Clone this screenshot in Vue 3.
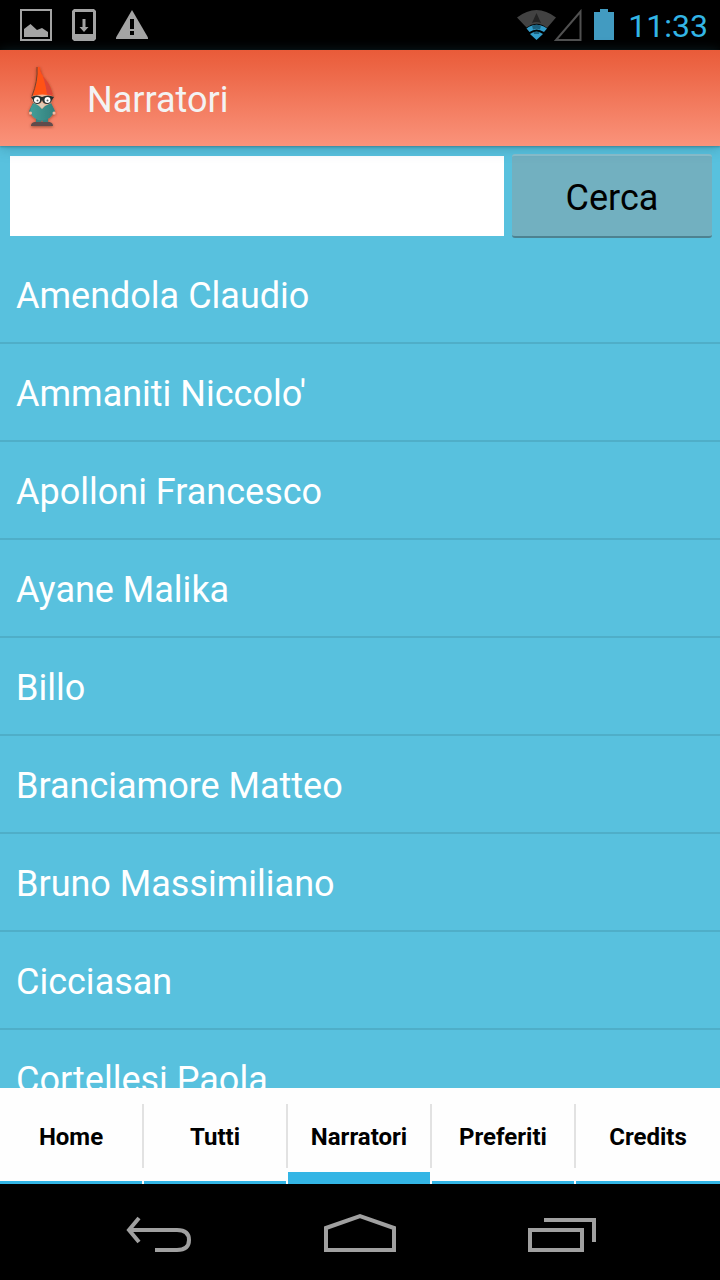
<script setup>
import { ref } from 'vue'

const query = ref('')
const activeTab = ref('Narratori')
const tabs = ['Home', 'Tutti', 'Narratori', 'Preferiti', 'Credits']
const narrators = [
  'Amendola Claudio',
  "Ammaniti Niccolo'",
  'Apolloni Francesco',
  'Ayane Malika',
  'Billo',
  'Branciamore Matteo',
  'Bruno Massimiliano',
  'Cicciasan',
  'Cortellesi Paola',
]
</script>

<template>
  <div class="screen">
    <div class="status">
      <div class="notifications">
        <svg class="picture" width="32" height="32" viewBox="0 0 32 32">
          <rect x="1" y="1" width="30" height="30" fill="none" stroke="#a4a4a4" stroke-width="2" />
          <path d="M4 28V20L10.500 15L17 21L22 19L28 23V28Z" fill="#a4a4a4" />
        </svg>
        <svg class="download" width="24" height="32" viewBox="0 0 24 32">
          <path fill="#a4a4a4" fill-rule="evenodd" d="M2 0H22L24 2V30L22 32H2L0 30V2ZM3 3V25H21V3Z" />
          <path fill="#a4a4a4" d="M10.500 10H13.500V18H16.500L12 23L7.500 18H10.500Z" />
        </svg>
        <svg class="warning" width="32" height="32" viewBox="0 0 32 32">
          <path fill="#a4a4a4" d="M16 1L32 28.500V30H0V28.500Z" />
          <path fill="#000" d="M14 10H18V20H14ZM14 22H18V26H14Z" />
        </svg>
      </div>
      <div class="system">
        <svg width="40" height="32" viewBox="0 0 40 32">
          <path fill="#424242" d="M0 8.500Q19.500 -6.500 39 8.500L30 19Q19.500 11 9.500 18.500Z" />
          <path fill="#242424" d="M19.500 4L24 14Q19.500 12 15 14Z" />
          <path fill="#339dca" d="M9.500 19.500Q19.500 12 30 19.500L27 23Q19.500 18 12.500 23Z" />
          <path fill="#1b607e" d="M15 16.500Q19.500 15 24 16.500L23 20.500Q19.500 19 16 20.500Z" />
          <path fill="#339dca" d="M13 25Q19.500 20.500 26 25L19.500 31Z" />
          <path fill="#1b607e" d="M16.500 23Q19.500 22 22.500 23L22 25H17Z" />
        </svg>
        <svg class="signal" width="28" height="32" viewBox="0 0 28 32">
          <path d="M26.500 2.500V31H2Z" fill="none" stroke="#505050" stroke-width="2" />
        </svg>
        <svg class="battery" width="20" height="32" viewBox="0 0 20 32">
          <path fill="#429bc1" d="M6 0H14V3H20V31H0V3H6Z" />
        </svg>
        <time class="clock">11:33</time>
      </div>
    </div>

    <header class="header">
      <svg class="gnome" width="46" height="76" viewBox="0 0 46 76">
        <defs>
          <filter id="gnome-shadow" x="-30%" y="-20%" width="160%" height="140%">
            <feDropShadow dx="0" dy="1" stdDeviation="1.500" flood-color="#602818" flood-opacity="0.6" />
          </filter>
          <linearGradient id="gnome-coat" x1="0" x2="1">
            <stop offset="0" stop-color="#429e98" />
            <stop offset="1" stop-color="#34817e" />
          </linearGradient>
        </defs>
        <g filter="url(#gnome-shadow)">
          <path fill="#604c4b" d="M11 65Q12 61 20 62H24Q33 61 33 66H11Z" />
          <path fill="#397f7e" d="M16 58H28V62H23L22 60L21 62H16Z" />
          <path fill="#34817e" d="M13 43L9 51L11 54L17 47ZM31 43L35 51L33 54L27 47Z" />
          <ellipse cx="22" cy="50.500" rx="11.500" ry="10" fill="url(#gnome-coat)" />
          <path fill="#f0b99d" d="M12 34H33L31 43L25 46L22 49L19 46L13 42Z" />
          <path fill="#dccdb9" d="M12 39Q17 45 20 44L22 43L25 45Q30 44 32 39L30 43L25 45L22 48L19 45L14 43Z" />
          <path fill="#ff5219" d="M17 7H20Q21 15 26 20Q31 26 33 36Q22 33 12 36Q17 22 17 7Z" />
          <path fill="#da4538" d="M19 7Q21 15 26 20Q31 26 33 36L27 34Q25 19 19 7Z" />
          <path fill="none" stroke="#754330" stroke-width="1" d="M17 7Q18 21 12 36" />
          <circle cx="10.500" cy="53" r="1.500" fill="#edbba5" />
          <circle cx="34" cy="53" r="1.500" fill="#edbba5" />
        </g>
        <path fill="#26302f" d="M11 37Q17 34 22 37Q28 34 34 37L32 40Q31 44 27 44Q23 44 22 40Q21 44 17 44Q13 43 13 40Z" />
        <circle cx="17" cy="40" r="3" fill="#fff" />
        <circle cx="27.500" cy="40" r="3" fill="#fff" />
        <circle cx="17.500" cy="40.500" r="1" fill="#526160" />
        <circle cx="27.500" cy="40.500" r="1" fill="#526160" />
      </svg>
      <h1 class="title">Narratori</h1>
    </header>

    <main class="content">
      <form class="search" @submit.prevent>
        <input v-model="query" class="field" type="text" aria-label="Cerca narratori" />
        <button class="submit" type="submit">Cerca</button>
      </form>
      <ul class="list">
        <li v-for="name in narrators" :key="name" class="row">{{ name }}</li>
      </ul>
    </main>

    <nav class="tabs">
      <button
        v-for="tab in tabs"
        :key="tab"
        type="button"
        class="tab"
        :class="{ active: tab === activeTab }"
        @click="activeTab = tab"
      >
        <span class="tab-label">{{ tab }}</span>
      </button>
    </nav>

    <div class="navbar">
      <button class="key" type="button" aria-label="Indietro">
        <svg width="72" height="40" viewBox="0 0 72 40" fill="none" stroke="#a0a0a0" stroke-width="4">
          <path d="M9 18H57Q69 18 69 28Q69 38 57 38H35" />
          <path d="M19 6L9 18L19 30" />
        </svg>
      </button>
      <button class="key" type="button" aria-label="Home">
        <svg width="72" height="40" viewBox="0 0 72 40">
          <path d="M2 16L36 4L70 16V38H2Z" fill="none" stroke="#a0a0a0" stroke-width="4" />
        </svg>
      </button>
      <button class="key" type="button" aria-label="Recenti">
        <svg width="72" height="40" viewBox="0 0 72 40" fill="none" stroke="#a0a0a0" stroke-width="4">
          <path d="M2 18H54V38H2Z" />
          <path d="M16 8H66V30" />
        </svg>
      </button>
    </div>
  </div>
</template>

<style>
body {
  margin: 0;
  background: #000;
}
</style>

<style scoped>
.screen {
  height: 100vh;
  display: flex;
  flex-direction: column;
  overflow: hidden;
  background: #58c1de;
  font-family: Roboto, "Noto Sans", sans-serif;
}
svg {
  display: block;
  flex: none;
}
button {
  font-family: inherit;
  cursor: pointer;
}
.status {
  flex: none;
  height: 50px;
  box-sizing: border-box;
  padding: 0 12px 0 20px;
  display: flex;
  align-items: center;
  justify-content: space-between;
  background: #000;
}
.notifications,
.system {
  display: flex;
  align-items: center;
}
.notifications {
  gap: 20px;
}
.system {
  gap: 12px;
}
.signal {
  margin-left: -15px;
}
.clock {
  margin-left: 2px;
  padding-top: 2px;
  font-size: 32px;
  line-height: 48px;
  color: #33b5e5;
}
.header {
  flex: none;
  position: relative;
  height: 96px;
  box-sizing: border-box;
  padding-left: 20px;
  display: flex;
  align-items: center;
  gap: 21px;
  background: linear-gradient(#e95b39, #fa937b);
  box-shadow: 0 1px 2px #28647380, 0 2px 12px #28647366;
}
.title {
  margin: 0;
  padding-top: 4px;
  font-size: 36px;
  line-height: 48px;
  font-weight: 400;
  color: #f3f3f3;
}
.content {
  flex: 1;
  min-height: 0;
  overflow: hidden;
}
.search {
  display: flex;
  align-items: center;
  gap: 8px;
  padding: 8px 8px 8px 10px;
}
.field {
  flex: 1;
  min-width: 0;
  height: 80px;
  box-sizing: border-box;
  padding: 0 12px;
  border: 0;
  border-radius: 0;
  background: #fff;
  color: #000;
  font: 36px Roboto, sans-serif;
}
.submit {
  width: 200px;
  height: 84px;
  padding: 4px 0 0;
  border: 0;
  border-top: 2px solid #8bbfcc;
  border-bottom: 2px solid #4d8291;
  border-radius: 3px;
  background: #72b0c0;
  color: #000;
  font-size: 36px;
}
.list {
  margin: 0;
  padding: 0;
  list-style: none;
}
.row {
  height: 98px;
  box-sizing: border-box;
  padding: 0 16px;
  border-bottom: 2px solid #4faec8;
  color: #fff;
  font-size: 36px;
  line-height: 100px;
  white-space: nowrap;
}
.tabs {
  flex: none;
  height: 96px;
  display: grid;
  grid-template-columns: repeat(5, 1fr);
  background: #fefefe;
}
.tab {
  min-width: 0;
  display: flex;
  flex-direction: column;
  padding: 16px 0 0;
  border: 0;
  background: linear-gradient(#33b5e5, #33b5e5) left bottom / calc(100% - 2px) 3px no-repeat;
  color: #000;
  font-size: 24px;
  font-weight: 700;
}
.tab.active {
  background-size: calc(100% - 2px) 12px;
}
.tab:last-child {
  background-size: 100% 3px;
}
.tab-label {
  width: 100%;
  height: 64px;
  box-sizing: border-box;
  border-right: 2px solid #e2e2e2;
  line-height: 66px;
  text-align: center;
}
.tab:last-child .tab-label {
  border-right: 0;
}
.navbar {
  flex: none;
  height: 96px;
  display: flex;
  align-items: center;
  justify-content: center;
  gap: 4px;
  background: #000;
}
.key {
  width: 200px;
  height: 96px;
  padding: 0;
  border: 0;
  background: none;
  display: flex;
  align-items: center;
  justify-content: center;
}
</style>
